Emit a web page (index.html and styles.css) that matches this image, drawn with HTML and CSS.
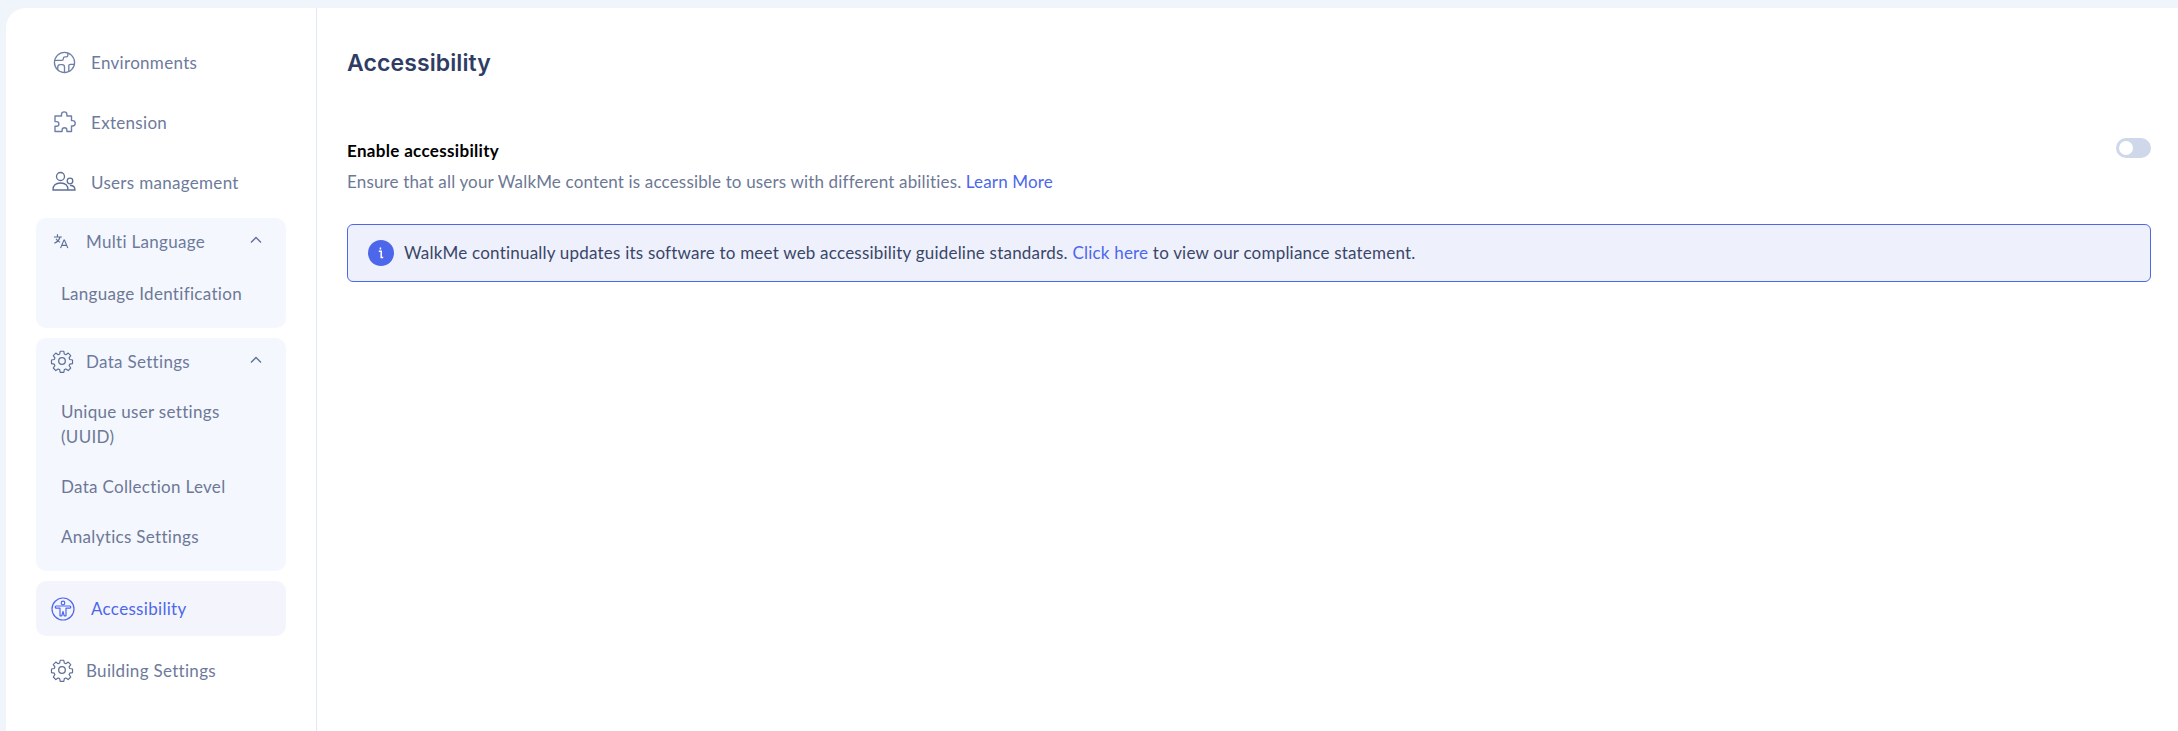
FILE: index.html
```html
<!DOCTYPE html>
<html lang="en">
<head>
<meta charset="utf-8">
<title>Accessibility</title>
<link rel="stylesheet" href="styles.css">
</head>
<body>
<div class="shell">
  <aside class="sidebar">
    <div class="item"><span class="icon">
      <svg viewBox="0 0 24 24" width="23" height="23" fill="none" stroke="#6f80a8" stroke-width="1.400"><circle cx="12" cy="12" r="10.500"/><path d="M5 20v-3.200c0-1.600 1-2.600 2.500-2.600h2c1.500 0 2.500 1 2.500 2.500v5.500M16.500 22v-6.500c0-1 .6-1.500 1.500-1.500h4.500M15.500 2v2.500c0 1-.6 1.700-1.700 1.700h-1.300c-1 0-1.700.7-1.700 1.700v.3c0 1-.7 1.600-1.700 1.600H1.800"/></svg>
    </span><span class="label">Environments</span></div>
    <div class="item"><span class="icon">
      <svg viewBox="0 0 24 24" width="24" height="24" fill="none" stroke="#6f80a8" stroke-width="1.400" stroke-linejoin="round"><path d="M9.500 6V4.600a2.700 2.700 0 0 1 5.400 0V6h4.600v4.600h1a2.700 2.700 0 0 1 0 5.400h-1v5.500h-4.600v-1.400a2.400 2.400 0 0 0-4.800 0v1.400H3v-5.300h1.600a2.300 2.300 0 0 0 0-4.600H3V6z"/></svg>
    </span><span class="label">Extension</span></div>
    <div class="item"><span class="icon">
      <svg viewBox="0 0 24 24" width="24" height="24" fill="none" stroke="#5f6f96" stroke-width="1.300" stroke-linecap="round"><circle cx="8.500" cy="6.500" r="4"/><path d="M1 20c0-4.500 3-7 7.500-7s7.500 2.500 7.500 7zM16 20h7c0-2.800-1.700-4.500-4.500-4.500"/><circle cx="18" cy="11" r="2.800"/></svg>
    </span><span class="label">Users management</span></div>

    <section class="group group-lang">
      <div class="group-head">
        <span class="icon-small">
          <svg viewBox="0 0 18 18" width="18" height="18" fill="none" stroke="#5f6f96" stroke-width="1.300"><path d="M1 4.500h9M5 1.500v3M8 4.500c-.8 3-3 5.500-6.500 7M3.500 6.500c.8 1.700 2.500 3.200 4.500 4M8.500 17l3.800-9h.6l3.800 9M10 14h5.200"/></svg>
        </span>
        <span class="group-title">Multi Language</span>
        <svg class="chev" viewBox="0 0 12 8" width="12" height="8" fill="none" stroke="#5f6f96" stroke-width="1.300"><path d="M1 6.500 6 1.500l5 5"/></svg>
      </div>
      <div class="sub">Language Identification</div>
    </section>

    <section class="group group-data">
      <div class="group-head">
        <span class="icon-gear">
          <svg viewBox="0 0 24 24" width="24" height="24" fill="none" stroke="#5f6f96" stroke-width="1.300" stroke-linejoin="round"><circle cx="12" cy="12" r="3.300"/><path d="M10 1.200h4l.6 3.100 1.700.7 2.600-1.800 2.800 2.800-1.800 2.600.7 1.700 3.100.6v4l-3.100.6-.7 1.700 1.800 2.600-2.800 2.800-2.600-1.800-1.700.7-.6 3.100h-4l-.6-3.100-1.700-.7-2.600 1.800-2.800-2.800 1.800-2.600-.7-1.700-3.100-.6v-4l3.100-.6.700-1.700-1.800-2.600 2.800-2.800 2.600 1.800 1.700-.7z" transform="translate(1.200 1.200) scale(.9)"/></svg>
        </span>
        <span class="group-title">Data Settings</span>
        <svg class="chev" viewBox="0 0 12 8" width="12" height="8" fill="none" stroke="#5f6f96" stroke-width="1.300"><path d="M1 6.500 6 1.500l5 5"/></svg>
      </div>
      <div class="sub sub-wrap">Unique user settings (UUID)</div>
      <div class="sub">Data Collection Level</div>
      <div class="sub">Analytics Settings</div>
    </section>

    <div class="active"><span class="icon">
      <svg viewBox="0 0 24 24" width="24" height="24" fill="none" stroke="#4d67eb" stroke-width="1.200" stroke-linejoin="round"><circle cx="12" cy="12" r="11"/><circle cx="12" cy="6" r="1.800"/><path d="M5 9h14c1 0 1 2.200 0 2.200h-4v7.600h-1.800L12 14.500l-1.200 4.300H9v-7.600H5c-1 0-1-2.200 0-2.200z"/></svg>
    </span><span class="label">Accessibility</span></div>

    <div class="item item-gear"><span class="icon-gear">
      <svg viewBox="0 0 24 24" width="24" height="24" fill="none" stroke="#5f6f96" stroke-width="1.300" stroke-linejoin="round"><circle cx="12" cy="12" r="3.300"/><path d="M10 1.200h4l.6 3.100 1.700.7 2.600-1.800 2.800 2.800-1.800 2.600.7 1.700 3.100.6v4l-3.100.6-.7 1.700 1.800 2.600-2.800 2.800-2.600-1.800-1.700.7-.6 3.100h-4l-.6-3.100-1.700-.7-2.600 1.800-2.800-2.800 1.800-2.600-.7-1.700-3.100-.6v-4l3.100-.6.700-1.700-1.800-2.600 2.800-2.800 2.600 1.800 1.700-.7z" transform="translate(1.200 1.200) scale(.9)"/></svg>
    </span><span class="group-title">Building Settings</span></div>
  </aside>

  <main class="content">
    <h1 class="title">Accessibility</h1>
    <div class="setting">
      <div class="setting-text">
        <h2 class="setting-name">Enable accessibility</h2>
        <p class="setting-desc">Ensure that all your WalkMe content is accessible to users with different abilities. <a class="link" href="#">Learn More</a></p>
      </div>
      <span class="toggle"><span class="knob"></span></span>
    </div>
    <div class="notice">
      <span class="notice-icon">
        <svg viewBox="0 0 26 26" width="26" height="26"><circle cx="13" cy="13" r="13" fill="#4d67eb"/><path d="M10.800 11.300h2.400v6.200h2M12.400 7.600v2" fill="none" stroke="#fff" stroke-width="1.500"/></svg>
      </span>
      <span>WalkMe continually updates its software to meet web accessibility guideline standards. <a class="link" href="#">Click here</a> to view our compliance statement.</span>
    </div>
  </main>
</div>
</body>
</html>
```
FILE: styles.css
```css
* { box-sizing: border-box; }
html, body { height: 100%; }
body {
  margin: 0;
  background: #f0f4fb;
  font-family: "Lato", "Open Sans", sans-serif;
  font-size: 17px;
  overflow: hidden;
}
.shell {
  display: flex;
  height: 723px;
  margin: 8px 0 0 6px;
  background: #fff;
  border-top-left-radius: 20px;
}
.sidebar {
  width: 311px;
  flex: none;
  border-right: 1px solid #e3e8f8;
  padding: 25px 0 0 30px;
  color: #6d7896;
  letter-spacing: .31px;
}
.item {
  display: flex;
  align-items: center;
  height: 60px;
  width: 250px;
  padding-bottom: 2px;
}
.icon {
  width: 30px;
  margin-left: 13px;
  margin-right: 12px;
  display: flex;
  justify-content: center;
}
.label { color: #6d7a9c; }
.group {
  width: 250px;
  background: #f4f7fe;
  border-radius: 10px;
}
.group-lang { height: 110px; margin-top: 5px; }
.group-data { height: 233px; margin-top: 10px; }
.group-head {
  display: flex;
  align-items: center;
  height: 46px;
  padding-right: 24px;
}
.icon-small {
  margin-left: 17px;
  margin-right: 17px;
  width: 16px;
  display: flex;
}
.icon-gear {
  margin-left: 14px;
  margin-right: 12px;
  width: 24px;
  display: flex;
}
.group-title { flex: 1; color: #6d7a9c; }
.chev { flex: none; margin-top: -2px; }
.sub {
  padding: 0 12px 0 25px;
  line-height: 25px;
  margin-bottom: 25px;
  color: #6d7896;
}
.group-lang .sub { margin-top: 17px; }
.group-data .sub { margin-bottom: 25px; }
.group-data .sub-wrap { margin-top: 15px; padding-right: 30px; }
.active {
  display: flex;
  align-items: center;
  width: 250px;
  height: 55px;
  margin-top: 10px;
  background: #f4f5fc;
  border-radius: 10px;
}
.active .icon { margin-left: 12px; margin-right: 13px; }
.active .label { color: #4d67eb; }
.item-gear { height: 70px; }
.content {
  flex: 1;
  padding: 0 27px 0 30px;
}
.title {
  margin: 0;
  padding-top: 38px;
  height: 125px;
  font-family: "Inter", sans-serif;
  font-size: 23px;
  line-height: 34px;
  font-weight: 600;
  letter-spacing: .1px;
  color: #2f3d64;
}
.setting {
  display: flex;
  justify-content: space-between;
  align-items: flex-start;
  height: 91px;
}
.setting-name {
  margin: 6px 0 0;
  font-size: 17px;
  line-height: 24px;
  font-weight: 700;
  letter-spacing: .32px;
  color: #000;
}
.setting-desc {
  margin: 7px 0 0;
  line-height: 24px;
  color: #6d7896;
  letter-spacing: .16px;
}
.link { color: #4d67eb; text-decoration: none; }
.toggle {
  width: 35px;
  height: 20px;
  border-radius: 10px;
  background: #ced8ea;
  padding: 3px;
  margin-top: 5px;
}
.knob {
  display: block;
  width: 14px;
  height: 14px;
  border-radius: 50%;
  background: #fff;
}
.notice {
  display: flex;
  align-items: center;
  height: 58px;
  background: #eef1fc;
  border: 1px solid #4d67eb;
  border-radius: 6px;
  padding-left: 20px;
  padding-bottom: 1px;
  color: #3a4668;
  letter-spacing: .21px;
}
.notice-icon {
  display: flex;
  margin-right: 10px;
}
```
